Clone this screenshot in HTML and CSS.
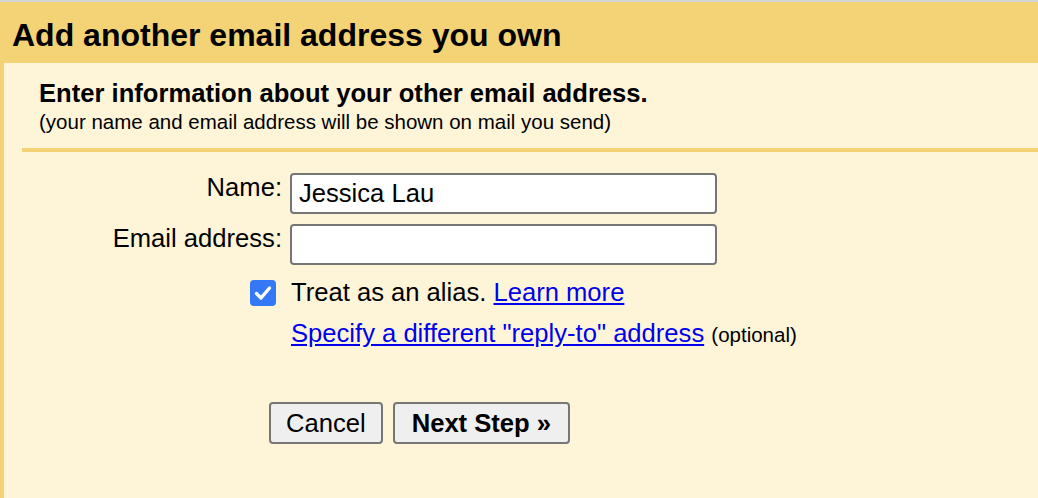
FILE: index.html
```html
<!DOCTYPE html>
<html lang="en">
<head>
    <meta charset="UTF-8">
    <meta name="viewport" content="width=device-width, initial-scale=1.0">
    <title>Add another email address you own</title>
    <link rel="stylesheet" href="styles.css">
</head>
<body>
    <div class="topbar"></div>
    <div class="dialog">
        <header class="dialog-head">
            <h1>Add another email address you own</h1>
        </header>
        <main class="dialog-body">
            <div class="intro">
                <h2>Enter information about your other email address.</h2>
                <p>(your name and email address will be shown on mail you send)</p>
            </div>
            <form class="fields">
                <label for="name" class="field-label">Name:</label>
                <input type="text" id="name" class="field-input" value="Jessica Lau">

                <label for="email" class="field-label">Email address:</label>
                <input type="text" id="email" class="field-input">

                <div class="check-cell">
                    <span class="checkbox">
                        <svg width="18" height="16" viewBox="0 0 18 16">
                            <path d="M2.5 8.5 L7 13 L15.5 3" fill="none" stroke="#fff" stroke-width="3.4" stroke-linecap="round" stroke-linejoin="round"/>
                        </svg>
                    </span>
                </div>
                <div class="field-text">Treat as an alias. <a href="#">Learn more</a></div>

                <div></div>
                <div class="field-text reply-to"><a href="#">Specify a different "reply-to" address</a> <span class="optional">(optional)</span></div>
            </form>
            <div class="actions">
                <button type="button" class="btn">Cancel</button>
                <button type="button" class="btn btn-primary">Next Step &raquo;</button>
            </div>
        </main>
    </div>
</body>
</html>
```

FILE: styles.css
```css
html, body {
    height: 100%;
}
body {
    margin: 0;
    font-family: "Liberation Sans", Arial, sans-serif;
    color: #000;
    background-color: #fef5d9;
    display: flex;
    flex-direction: column;
}
.topbar {
    height: 2px;
    background-color: #d4d4d4;
}
.dialog {
    flex: 1;
    display: flex;
    flex-direction: column;
    border-left: 4px solid #f3d375;
}
.dialog-head {
    background-color: #f3d375;
    padding: 15px 8px 10px 12px;
    margin-left: -4px;
}
.dialog-head h1 {
    margin: 0;
    font-size: 32px;
    line-height: 36px;
    font-weight: bold;
}
.dialog-body {
    flex: 1;
    background-color: #fef5d9;
    padding: 16px 0 0 18px;
}
.intro {
    padding: 0 0 15px 17px;
    border-bottom: 4px solid #f3d375;
}
.intro h2 {
    margin: 0;
    font-size: 25.6px;
    line-height: 29px;
    font-weight: bold;
}
.intro p {
    margin: 2px 0 0;
    font-size: 20.5px;
    line-height: 23px;
}
.fields {
    display: grid;
    grid-template-columns: 260px 1fr;
    column-gap: 8px;
    row-gap: 10px;
    align-items: start;
    margin-top: 21px;
    font-size: 25.6px;
}
.field-label {
    text-align: right;
    line-height: 29px;
}
.field-input {
    box-sizing: border-box;
    height: 41px;
    width: 427px;
    margin: 0;
    border: 2px solid #767676;
    border-radius: 4px;
    background-color: #fff;
    padding: 0 7px;
    font-family: inherit;
    font-size: 25.6px;
    color: #000;
}
.check-cell {
    display: flex;
    justify-content: flex-end;
    align-self: center;
    padding-right: 6px;
}
.checkbox {
    width: 26px;
    height: 26px;
    border-radius: 4px;
    background-color: #3478f6;
    display: flex;
    align-items: center;
    justify-content: center;
}
.field-text {
    line-height: 29px;
    padding-left: 1px;
    white-space: nowrap;
}
.fields .check-cell,
.fields .check-cell + .field-text {
    margin-top: 3px;
}
.reply-to {
    margin-top: 2px;
}
.field-text a {
    color: #0000ee;
}
.optional {
    font-size: 20.5px;
}
.actions {
    display: flex;
    gap: 10px;
    margin-top: 53px;
    padding-left: 247px;
}
.btn {
    box-sizing: border-box;
    height: 42px;
    padding: 0 15px;
    border: 2px solid #767676;
    border-radius: 4px;
    background-color: #efefef;
    font-family: inherit;
    font-size: 25.6px;
    color: #000;
}
.btn-primary {
    font-weight: bold;
    padding: 0 17px;
}
```
